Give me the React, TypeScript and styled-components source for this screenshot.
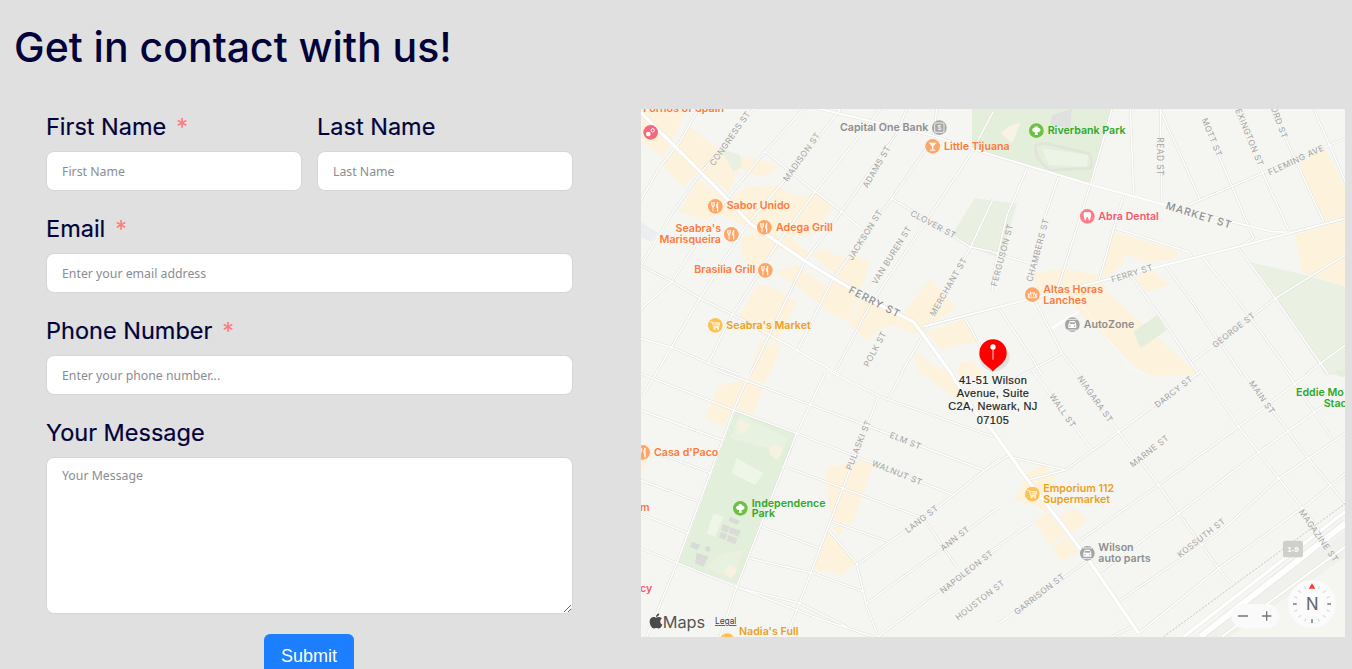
import React from "react";
import styled, { createGlobalStyle } from "styled-components";
import { FaApple } from "react-icons/fa";

const Global = createGlobalStyle`
  html, body { margin: 0; padding: 0; background: #e0e0e0; height: 669px; overflow: hidden; }
  #root { height: 669px; overflow: hidden; }
`;
const Page = styled.main`
  padding: 22px 7px 0 14px;
  font-family: "Inter", "Liberation Sans", sans-serif;
  color: #02023a;
`;
const Title = styled.h1`
  margin: 0;
  font-size: 41px;
  line-height: 50px;
  font-weight: 500;
  letter-spacing: 0;
`;
const Columns = styled.div`
  display: grid;
  grid-template-columns: 527px 704px;
  justify-content: space-between;
  padding-left: 32px;
  margin-top: 37px;
`;
const Form = styled.form`
  display: flex;
  flex-direction: column;
  gap: 23px;
  padding-top: 3px;
`;
const Row = styled.div`
  display: grid;
  grid-template-columns: 1fr 1fr;
  gap: 15px;
`;
const Field = styled.div`
  display: flex;
  flex-direction: column;
  gap: 9px;
`;
const Label = styled.label`
  font-size: 23.5px;
  line-height: 30px;
  height: 30px;
  font-weight: 400;
  white-space: nowrap;
  -webkit-text-stroke: 0.2px #02023a;
`;
const Star = styled.span`
  color: #ff7b7b;
  margin-left: 10px;
  -webkit-text-stroke: 0;
`;
const Input = styled.input`
  box-sizing: border-box;
  height: 40px;
  width: 100%;
  border: 1px solid #d6d6d6;
  border-radius: 8px;
  background: #fff;
  padding: 0 15px;
  font-family: "Noto Sans", sans-serif;
  font-size: 12.3px;
  outline: none;
  &::placeholder { color: #8a8d92; opacity: 1; }
`;
const TextArea = styled.textarea`
  box-sizing: border-box;
  display: block;
  height: 157px;
  width: 100%;
  border: 1px solid #d6d6d6;
  border-radius: 8px;
  background: #fff;
  padding: 9px 15px;
  font-family: "Noto Sans", sans-serif;
  font-size: 12.3px;
  outline: none;
  &::placeholder { color: #8a8d92; opacity: 1; }
`;
const Submit = styled.button`
  align-self: center;
  width: 90px;
  height: 44px;
  margin: -3px 1px 0 0;
  border: 0;
  border-radius: 6px;
  background: #1b7fff;
  color: #fff;
  font-family: "Liberation Sans", sans-serif;
  font-size: 18px;
  padding: 0;
`;
const MapPanel = styled.svg`
  display: block;
  width: 704px;
  height: 528px;
  background: #f5f6f1;
`;
const Poi = styled.text<{ $c: string; $end?: boolean }>`
  font-family: "Inter", "Liberation Sans", sans-serif;
  font-size: 32px;
  font-weight: 600;
  fill: ${(p) => p.$c};
  text-anchor: ${(p) => (p.$end ? "end" : "start")};
`;
const Street = styled.text<{ $big?: boolean }>`
  font-family: "Inter", "Liberation Sans", sans-serif;
  font-size: ${(p) => (p.$big ? 31 : 25)}px;
  font-weight: ${(p) => (p.$big ? 500 : 400)};
  letter-spacing: ${(p) => (p.$big ? 3 : 1.5)}px;
  fill: ${(p) => (p.$big ? "#8f8f8f" : "#a4a4a2")};
  text-anchor: middle;
  dominant-baseline: central;
`;
const PinText = styled.text`
  font-family: "Liberation Sans", sans-serif;
  font-size: 33px;
  letter-spacing: 1px;
  fill: #222;
  stroke: #222;
  stroke-width: 0.5px;
  text-anchor: middle;
`;
const MapsWord = styled.text`
  font-family: "Inter", "Liberation Sans", sans-serif;
  font-size: 49px;
  fill: #555;
`;
const Legal = styled.text`
  font-family: "Inter", "Liberation Sans", sans-serif;
  font-size: 25px;
  fill: #444;
  text-decoration: underline;
`;
const North = styled.text`
  font-family: "Inter", "Liberation Sans", sans-serif;
  font-size: 50px;
  fill: #666;
  text-anchor: middle;
`;
const Shield = styled.text`
  font-family: "Liberation Sans", sans-serif;
  font-size: 24px;
  font-weight: 700;
  fill: #fff;
  text-anchor: middle;
`;

type P = number[];
const pts = (a: P) => {
  const o: string[] = [];
  for (let i = 0; i < a.length; i += 2) o.push(`${a[i]},${a[i + 1]}`);
  return o.join(" ");
};

const Q = ({ x = 0, y = 0, children }: { x?: number; y?: number; children: React.ReactNode }) => (
  <g transform={`translate(${x} ${y})`}>{children}</g>
);
const Polys = ({ list, fill }: { list: P[]; fill: string }) => (
  <>
    {list.map((a, i) => (
      <polygon key={i} points={pts(a)} fill={fill} />
    ))}
  </>
);

const roads3: P[] = [
  [0, 290, 60, 185, 120, 110, 175, 12],
  [5, 478, 100, 320, 185, 200, 262, 110, 340, 12],
  [0, 615, 95, 530, 180, 400, 262, 280, 375, 140, 490, 12],
  [10, 870, 95, 725, 180, 580, 320, 360, 465, 190, 600, 12],
  [205, 775, 270, 640, 410, 420, 525, 260, 665, 85, 720, 12],
  [330, 810, 495, 468, 605, 320, 770, 85, 800, 12],
  [470, 740, 580, 520, 755, 280, 880, 100, 890, 12],
  [580, 810, 690, 600, 825, 400, 990, 150, 1060, 20],
  [780, 810, 850, 690, 990, 430, 1060, 280],
  [0, 480, 95, 530, 180, 580, 300, 640, 470, 735, 600, 810],
  [0, 700, 90, 725, 205, 775, 300, 810],
  [375, 140, 525, 260, 605, 320, 680, 385],
  [755, 280, 990, 425, 1080, 445],
  [850, 665, 1080, 605],
  [975, 640, 1040, 760],
  [595, 12, 600, 30],
];
const roads4: P[] = [
  [360, 12, 295, 240, 210, 510, 190, 570],
  [105, 190, 45, 330, 10, 480, 0, 560],
  [200, 215, 160, 330, 110, 525],
  [395, 270, 365, 370, 320, 530],
  [415, 12, 425, 270],
  [505, 12, 510, 290],
  [505, 15, 625, 285],
  [635, 45, 720, 245, 770, 365],
  [730, 12, 810, 200, 890, 375],
  [840, 12, 890, 120, 995, 350],
  [965, 12, 1060, 230],
  [590, 300, 810, 205, 1060, 100],
  [370, 370, 590, 440, 600, 455],
  [770, 370, 785, 400, 740, 425],
  [630, 455, 740, 590, 900, 810],
  [520, 480, 620, 620, 750, 810],
  [415, 510, 530, 670, 620, 810],
  [740, 430, 850, 580, 1010, 810],
  [20, 610, 120, 760, 150, 810],
  [130, 590, 210, 745, 260, 810],
  [0, 440, 110, 475],
  [600, 770, 850, 580, 1060, 450],
  [0, 860, 210, 745],
  [940, 810, 985, 775, 1060, 720],
];
const roads5: P[] = [
  [320, 30, 285, 110, 110, 580, 50, 730, 20, 800],
  [555, 10, 470, 190, 290, 650, 240, 800],
  [715, 80, 610, 350, 440, 800],
  [790, 5, 745, 85],
  [0, 10, 280, 120, 470, 190, 610, 245, 940, 375],
  [230, 0, 500, 100, 715, 180, 1030, 300],
  [560, 0, 720, 80, 1060, 200],
  [0, 120, 245, 210],
  [0, 230, 215, 310],
  [0, 330, 175, 395],
  [0, 430, 145, 490],
  [0, 535, 115, 580, 290, 650, 520, 740, 700, 800],
  [435, 290, 610, 355, 850, 445, 950, 590],
  [365, 470, 540, 535],
  [330, 565, 520, 610, 670, 665],
  [575, 455, 745, 515],
  [300, 655, 480, 700, 620, 770],
  [565, 480, 650, 580, 680, 710, 715, 800],
  [650, 585, 850, 445, 1080, 265],
  [680, 700, 900, 540, 1080, 410],
  [715, 800, 900, 660, 1080, 530],
];
const roads6: P[] = [
  [120, 0, 300, 240],
  [260, 30, 380, 185, 500, 345, 560, 430, 680, 595, 715, 640],
  [625, 0, 740, 170, 860, 325, 990, 490],
  [750, 0, 945, 260, 1060, 400],
  [880, 0, 1020, 205],
  [220, 300, 380, 185, 625, 5],
  [265, 510, 500, 345, 740, 170, 950, 10],
  [0, 540, 125, 455],
  [325, 605, 560, 430, 795, 250, 1060, 60],
  [385, 690, 680, 490, 860, 325, 1060, 190],
  [440, 790, 680, 595, 950, 400, 1060, 310],
  [20, 760, 290, 570],
  [0, 290, 45, 258, 220, 300],
  [110, 330, 220, 300],
  [360, 800, 420, 770],
];

const trees = "M0-13a7 7 0 0 1 7 5 6 6 0 0 1 4 10 7 7 0 0 1-8 2l2 9h-10l2-9a7 7 0 0 1-8-2 6 6 0 0 1 4-10 7 7 0 0 1 7-5z";
const Glyph = ({ k }: { k: string }) => {
  const s = { stroke: "#fff", strokeWidth: 2.6, fill: "none", strokeLinecap: "round" as const };
  if (k === "fork")
    return (
      <g {...s}>
        <path d="M-11-12v9q0 4 4 4h0q4 0 4-4v-9M-7-12v26" />
        <path d="M7-12q-5 6-3 15h3v11M7-12v26" strokeWidth={3} />
      </g>
    );
  if (k === "cart")
    return (
      <g {...s}>
        <path d="M-14-10h5l4 14h15l3-11h-20M-4 7h14" />
        <circle cx={-3} cy={11} r={1.6} />
        <circle cx={8} cy={11} r={1.6} />
        <path d="M-3-2h14M2-7v10M7-7v10" strokeWidth={1.6} />
      </g>
    );
  if (k === "tree") return <path d={trees} fill="#fff" />;
  if (k === "tooth")
    return <path d="M-9-12q5-2 9 0 4-2 9 0 5 5 1 14l-2 10q-3 2-4-2l-2-7q-2-2-4 0l-2 7q-1 4-4 2l-2-10q-4-9 1-14z" fill="#fff" />;
  if (k === "car")
    return (
      <g>
        <path d="M-12 0l3-8q1-3 4-3h10q3 0 4 3l3 8v10h-24z" fill="#fff" />
        <rect x={-8} y={-7} width={16} height={5} fill="#a5a5a5" />
        <circle cx={-7} cy={4} r={2} fill="#a5a5a5" />
        <circle cx={7} cy={4} r={2} fill="#a5a5a5" />
        <path d="M-15 16h30M-15-16h30" stroke="#fff" strokeWidth={2.4} />
      </g>
    );
  if (k === "bank")
    return (
      <g>
        <rect x={-14} y={-14} width={28} height={28} rx={4} fill="none" stroke="#fff" strokeWidth={2.5} />
        <text textAnchor="middle" y={8} fontSize={21} fill="#fff" fontFamily="Liberation Sans">$</text>
      </g>
    );
  if (k === "drink")
    return <path d="M-12-11h24l-10 11v10h6v3h-16v-3h6v-10z" fill="#fff" />;
  if (k === "sun")
    return (
      <g {...s}>
        <path d="M-13 8a13 13 0 0 1 26 0zM-8 6l-5-9M-3 5l-3-13M3 5l3-13M8 6l5-9" />
      </g>
    );
  if (k === "baby")
    return (
      <g>
        <circle cx={-7} cy={5} r={7} fill="#fff" />
        <circle cx={6} cy={-6} r={5} fill="none" stroke="#fff" strokeWidth={3} />
      </g>
    );
  return null;
};
const Icon = ({ x, y, c, k }: { x: number; y: number; c: string; k: string }) => (
  <g transform={`translate(${x} ${y})`}>
    <circle r={22} fill={c} />
    <Glyph k={k} />
  </g>
);
const S = ({ x, y, a, t, big }: { x: number; y: number; a: number; t: string; big?: boolean }) => (
  <Street x={x} y={y} $big={big} transform={`rotate(${a} ${x} ${y})`}>
    {t}
  </Street>
);

const ORANGE = "#ff7a3c";
const AMBER = "#eba11e";
const GREEN = "#2fa92a";
const GREY = "#8e8e8e";
const ICO_OR = "#ffa566";
const ICO_AM = "#ffc14f";
const ICO_GR = "#6cc142";
const ICO_GY = "#a5a5a5";

const ticks = Array.from({ length: 16 }, (_, i) => (i * 360) / 16);

function MapView() {
  return (
    <MapPanel viewBox="3 12 2112 1584" role="img" aria-label="Map">
      {/* land use */}
      <Q>
        <Polys
          fill="#fdf2dc"
          list={[
            [0, 12, 140, 12, 105, 90, 70, 155, 0, 110],
            [70, 165, 115, 125, 180, 195, 130, 245, 75, 185],
            [110, 125, 150, 65, 270, 160, 335, 155, 415, 185, 375, 215, 330, 205, 300, 190, 265, 260, 190, 205],
            [115, 320, 175, 225, 260, 285, 330, 240, 370, 250, 410, 240, 470, 275, 420, 360, 390, 400, 310, 360, 240, 330, 185, 345],
            [300, 400, 370, 370, 410, 390, 510, 395, 580, 310, 530, 265, 470, 275, 420, 370, 515, 450, 490, 465, 420, 430, 340, 500, 310, 460],
            [405, 500, 470, 480, 610, 580, 545, 600, 480, 550],
            [515, 450, 545, 430, 610, 460, 645, 450, 690, 475, 660, 560, 600, 520],
            [545, 610, 580, 520, 660, 570, 630, 650, 600, 640],
            [630, 660, 670, 570, 780, 640, 840, 560, 870, 520, 950, 610, 900, 640, 830, 690, 760, 660, 720, 670, 680, 710],
            [295, 640, 350, 540, 395, 545, 470, 590, 410, 715],
            [360, 700, 420, 730, 390, 810, 330, 810],
            [860, 680, 980, 640, 1010, 710, 950, 720, 905, 735],
            [820, 740, 880, 780, 930, 810, 840, 810],
            [960, 770, 1000, 770, 1030, 810, 950, 810],
          ]}
        />
        <Polys fill="#e9efe1" list={[[935, 390, 1005, 280, 1080, 290, 1080, 460, 990, 425], [240, 130, 300, 150, 305, 185, 280, 200]]} />
        <Polys fill="#ecedf0" list={[[0, 350, 55, 385, 35, 410, 0, 395]]} />
      </Q>
      <Q x={1056}>
        <Polys
          fill="#fdf2dc"
          list={[
            [360, 380, 555, 435, 555, 460, 470, 470, 400, 450, 390, 480, 330, 525],
            [430, 520, 470, 490, 535, 540, 465, 560],
            [120, 505, 215, 490, 320, 510, 345, 560, 620, 810, 460, 810, 260, 620, 220, 570, 140, 560],
            [920, 175, 1000, 130, 1060, 250, 1060, 335, 990, 350],
            [910, 390, 1060, 345, 1060, 545, 930, 500],
          ]}
        />
        <Polys fill="#e3efda" list={[[-60, 12, 360, 12, 295, 240, 100, 185, -60, 135], [425, 680, 495, 630, 525, 675, 445, 730]]} />
        <Polys fill="#e9efe1" list={[[-24, 285, 75, 295, 30, 450, -24, 430]]} />
        <Polys fill="#eaf0e2" list={[[770, 470, 940, 510, 1060, 545, 1060, 810, 1000, 810, 850, 580]]} />
        <path d="M25 85q30-30 60-30l-25 60z" fill="#f8f3e4" />
        <path d="M130 125q5-10 30-10l130 30q15 25 5 45l-120 5q-45-30-45-70z" fill="none" stroke="#e1e4dd" strokeWidth={8} />
        <polygon points="150,130 290,150 285,185 170,180" fill="#ecf4e5" />
        <polygon points="180,30 240,12 235,70 175,60" fill="#dfe1de" />
      </Q>
      <Q y={795}>
        <Polys
          fill="#fdf2dc"
          list={[
            [195, 145, 235, 50, 265, 40, 320, 30, 370, 50, 340, 135, 280, 110, 250, 170],
            [325, 30, 345, -20, 395, -20, 375, 40],
            [0, 240, 25, 260, 15, 295, 0, 300],
            [555, 320, 565, 290, 600, 285, 640, 270, 700, 280, 670, 370, 665, 380, 635, 465, 575, 450],
            [575, 470, 620, 465, 595, 500],
            [520, 605, 565, 480, 650, 580, 600, 615, 570, 605],
            [840, 0, 920, 0, 1000, 120, 890, 45],
          ]}
        />
        <polygon points="285,125 470,190 295,645 115,580" fill="#e2efda" />
        <polygon points="270,205 300,135 445,205 425,245" fill="#e8f2e1" />
        <polygon points="290,265 370,310 345,345 275,310" fill="#eef6e8" />
        <polygon points="220,430 250,440 225,500 200,490" fill="#eef6e8" />
        <path d="M295 150q30 5 35 20l-28 25q-15-20-7-45zM385 235q25-20 45 0l-15 35q-30-10-30-35z" fill="#f6f1e1" />
        <Polys
          fill="#d9dcd6"
          list={[
            [270, 440, 300, 452, 292, 465, 265, 452],
            [250, 462, 270, 470, 262, 488, 243, 480],
            [272, 472, 302, 483, 295, 500, 266, 488],
            [243, 485, 262, 493, 255, 510, 236, 502],
            [266, 495, 292, 505, 285, 523, 260, 512],
            [155, 515, 182, 525, 172, 540, 150, 530],
            [198, 528, 212, 532, 208, 545, 194, 540],
            [170, 548, 205, 560, 190, 590, 165, 580],
          ]}
        />
        <path d="M205 590q30-40 100-45l-30 80z" fill="#e7f1df" stroke="#f3eddb" strokeWidth={5} />
        <circle cx={272} cy={603} r={17} fill="#f6f1e1" />
      </Q>
      <Q x={1056} y={795}>
        <Polys
          fill="#fdf2dc"
          list={[
            [110, 305, 155, 285, 190, 325, 165, 425, 125, 405, 65, 390],
            [125, 455, 165, 425, 220, 490, 175, 525],
            [205, 440, 245, 415, 285, 450, 240, 490],
            [180, 530, 225, 500, 260, 545, 210, 575],
          ]}
        />
        <polygon points="1030,0 1060,0 1060,20 1040,20" fill="#e3efda" />
        <polygon points="620,810 1060,480 1060,810" fill="#f0f0ec" />
        <polygon points="700,810 1060,560 1060,810" fill="#f6f6f1" />
      </Q>

      {/* streets */}
      {[
        { x: 0, y: 0, l: roads3 },
        { x: 1056, y: 0, l: roads4 },
        { x: 0, y: 795, l: roads5 },
        { x: 1056, y: 795, l: roads6 },
      ].map((q, i) => (
        <Q key={i} x={q.x} y={q.y}>
          {q.l.map((a, j) => (
            <polyline key={j} points={pts(a)} fill="none" stroke="#dededa" strokeWidth={7.5} strokeLinejoin="round" />
          ))}
          {q.l.map((a, j) => (
            <polyline key={j} points={pts(a)} fill="none" stroke="#fff" strokeWidth={4.5} strokeLinejoin="round" />
          ))}
        </Q>
      ))}
      {[
        [0, 20, 100, 120, 180, 200, 260, 280, 330, 355, 410, 410, 495, 468, 580, 520, 700, 590, 820, 650, 850, 690, 930, 800, 1000, 915, 1056, 975, 1156, 1115, 1256, 1245, 1346, 1365, 1496, 1585],
        [540, 12, 870, 90, 1056, 150, 1356, 240, 1576, 300, 1776, 350, 1896, 380, 1956, 382, 2116, 340],
        [850, 665, 1080, 605, 1376, 530, 1576, 480, 1796, 425, 2116, 340],
      ].map((a, i) => (
        <g key={i}>
          <polyline points={pts(a)} fill="none" stroke="#e4e4df" strokeWidth={i === 0 ? 13 : 8.5} strokeLinejoin="round" />
          <polyline points={pts(a)} fill="none" stroke="#fff" strokeWidth={i === 0 ? 10 : 5.5} strokeLinejoin="round" />
        </g>
      ))}
      <Q x={1056}>
        <polyline points="180,670 225,640 260,620" fill="none" stroke="#fff" strokeWidth={6} />
        <polyline points="270,600 420,795 470,810" fill="none" stroke="#fbfbf8" strokeWidth={3} />
      </Q>
      <Q x={1056} y={795}>
        <polyline points="515,800 1060,400" fill="none" stroke="#c4c4c0" strokeWidth={3} strokeDasharray="6 5" />
        <polyline points="575,800 1060,425" fill="none" stroke="#e2e2dd" strokeWidth={13} />
        <polyline points="575,800 1060,425" fill="none" stroke="#fff" strokeWidth={10} />
        <polyline points="625,800 1060,460" fill="none" stroke="#e2e2dd" strokeWidth={22} />
        <polyline points="625,800 1060,460" fill="none" stroke="#fff" strokeWidth={18} />
        <polyline points="690,800 1060,530" fill="none" stroke="#e2e2dd" strokeWidth={9} />
        <polyline points="690,800 1060,530" fill="none" stroke="#fff" strokeWidth={6} />
      </Q>

      {/* street names */}
      <Q>
        <S x={270} y={100} a={-55} t="CONGRESS ST" />
        <S x={485} y={155} a={-55} t="MADISON ST" />
        <S x={710} y={185} a={-60} t="ADAMS ST" />
        <S x={675} y={390} a={-58} t="JACKSON ST" />
        <S x={755} y={450} a={-58} t="VAN BUREN ST" />
        <S x={880} y={358} a={28} t="CLOVER ST" />
        <S x={705} y={590} a={27} t="FERRY ST" big />
        <S x={925} y={545} a={-60} t="MERCHANT ST" />
        <S x={705} y={732} a={-62} t="POLK ST" />
      </Q>
      <Q x={1056}>
        <S x={505} y={155} a={90} t="READ ST" />
        <S x={660} y={97} a={68} t="MOTT ST" />
        <S x={770} y={90} a={68} t="LEXINGTON ST" />
        <S x={862} y={52} a={70} t="ORD ST" />
        <S x={912} y={165} a={-25} t="FLEMING AVE" />
        <S x={622} y={330} a={17} t="MARKET ST" big />
        <S x={30} y={450} a={-75} t="FERGUSON ST" />
        <S x={137} y={435} a={-75} t="CHAMBERS ST" />
        <S x={420} y={505} a={-17} t="FERRY ST" />
        <S x={725} y={675} a={-38} t="GEORGE ST" />
      </Q>
      <Q y={795}>
        <S x={655} y={225} a={-68} t="PULASKI ST" />
        <S x={797} y={212} a={22} t="ELM ST" />
        <S x={772} y={308} a={22} t="WALNUT ST" />
        <S x={845} y={447} a={-38} t="LANG ST" />
        <S x={945} y={505} a={-38} t="ANN ST" />
        <S x={980} y={605} a={-38} t="NAPOLEON ST" />
        <S x={1020} y={690} a={-38} t="HOUSTON ST" />
      </Q>
      <Q x={1056} y={795}>
        <S x={545} y={65} a={-38} t="DARCY ST" />
        <S x={310} y={87} a={55} t="NIAGARA ST" />
        <S x={212} y={122} a={55} t="WALL ST" />
        <S x={810} y={82} a={55} t="MAIN ST" />
        <S x={472} y={243} a={-38} t="MARNE ST" />
        <S x={628} y={503} a={-38} t="KOSSUTH ST" />
        <S x={980} y={497} a={55} t="MAGAZINE ST" />
        <S x={142} y={672} a={-38} t="GARRISON ST" />
        <rect x={873} y={512} width={60} height={50} rx={8} fill="#cfcfcc" />
        <Shield x={903} y={546}>1-9</Shield>
      </Q>

      {/* places */}
      <Q>
        <Poi x={10} y={22} $c={ORANGE}>Fornos of Spain</Poi>
        <Icon x={32} y={82} c="#f5697f" k="baby" />
        <Poi x={600} y={78} $c={GREY}>Capital One Bank</Poi>
        <Icon x={898} y={68} c={ICO_GY} k="bank" />
        <Icon x={878} y={124} c={ICO_OR} k="drink" />
        <Poi x={912} y={135} $c={ORANGE}>Little Tijuana</Poi>
        <Icon x={226} y={304} c={ICO_OR} k="fork" />
        <Poi x={260} y={313} $c={ORANGE}>Sabor Unido</Poi>
        <Poi x={243} y={380} $c={ORANGE} $end>Seabra's</Poi>
        <Poi x={243} y={413} $c={ORANGE} $end>Marisqueira</Poi>
        <Icon x={274} y={388} c={ICO_OR} k="fork" />
        <Icon x={373} y={367} c={ICO_OR} k="fork" />
        <Poi x={408} y={378} $c={ORANGE}>Adega Grill</Poi>
        <Poi x={346} y={505} $c={ORANGE} $end>Brasilia Grill</Poi>
        <Icon x={376} y={496} c={ICO_OR} k="fork" />
        <Icon x={226} y={661} c={ICO_AM} k="cart" />
        <Poi x={259} y={672} $c={AMBER}>Seabra's Market</Poi>
      </Q>
      <Q x={1056}>
        <Icon x={133} y={77} c={ICO_GR} k="tree" />
        <Poi x={167} y={88} $c={GREEN}>Riverbank Park</Poi>
        <Icon x={286} y={334} c="#ff7b8a" k="tooth" />
        <Poi x={319} y={345} $c="#f8596f">Abra Dental</Poi>
        <Icon x={121} y={569} c={ICO_OR} k="sun" />
        <Poi x={154} y={563} $c={ORANGE}>Altas Horas</Poi>
        <Poi x={154} y={596} $c={ORANGE}>Lanches</Poi>
        <Icon x={241} y={659} c={ICO_GY} k="car" />
        <Poi x={275} y={670} $c={GREY}>AutoZone</Poi>
      </Q>
      <Q y={795}>
        <Icon x={8} y={247} c={ICO_OR} k="fork" />
        <Poi x={42} y={257} $c={ORANGE}>Casa d'Paco</Poi>
        <Icon x={301} y={415} c={ICO_GR} k="tree" />
        <Poi x={335} y={410} $c={GREEN}>Independence</Poi>
        <Poi x={335} y={442} $c={GREEN}>Park</Poi>
        <Poi x={0} y={423} $c={ORANGE}>m</Poi>
        <Poi x={0} y={666} $c="#f8596f">cy</Poi>
        <Poi x={297} y={795} $c={AMBER}>Nadia's Full</Poi>
        <Icon x={262} y={812} c={ICO_AM} k="cart" />
      </Q>
      <Q x={1056} y={795}>
        <Poi x={912} y={78} $c={GREEN}>Eddie Mo</Poi>
        <Poi x={995} y={110} $c={GREEN}>Stac</Poi>
        <Icon x={121} y={372} c={ICO_AM} k="cart" />
        <Poi x={154} y={365} $c={AMBER}>Emporium 112</Poi>
        <Poi x={154} y={398} $c={AMBER}>Supermarket</Poi>
        <Icon x={286} y={550} c={ICO_GY} k="car" />
        <Poi x={319} y={543} $c={GREY}>Wilson</Poi>
        <Poi x={319} y={577} $c={GREY}>auto parts</Poi>
      </Q>

      {/* marker */}
      <g transform="translate(1059 744)">
        <ellipse cx={4} cy={12} rx={46} ry={42} fill="#000" opacity={0.07} />
        <path d="M0 56C-8 42-41 32-41 0a41 41 0 0 1 82 0C41 32 8 42 0 56z" fill="#fe0000" />
        <circle cy={-18} r={8} fill="#fff" />
        <rect x={-1.5} y={-14} width={3} height={34} fill="#ffd0d0" />
      </g>
      <PinText x={1059} y={837}>41-51 Wilson</PinText>
      <PinText x={1059} y={875}>Avenue, Suite</PinText>
      <PinText x={1059} y={915}>C2A, Newark, NJ</PinText>
      <PinText x={1059} y={956}>07105</PinText>

      {/* controls */}
      <FaApple x={22} y={1522} size={52} color="#4a4a4a" />
      <MapsWord x={68} y={1568}>Maps</MapsWord>
      <Legal x={225} y={1557}>Legal</Legal>
      <Q x={1056} y={795}>
        <rect x={718} y={702} width={142} height={73} rx={36} fill="#fafafa" />
        <path d="M738 738h30M810 738h28M824 724v28" stroke="#777" strokeWidth={4} />
        <circle cx={960} cy={702} r={72} fill="#fbfbfb" />
        {ticks.map((a) => {
          const main = a % 90 === 0;
          if (a === 0) return null;
          return (
            <line
              key={a}
              x1={960}
              y1={645}
              x2={960}
              y2={main ? 656 : 654}
              stroke={main ? "#666" : "#d5d5d5"}
              strokeWidth={main ? 4 : 3.5}
              transform={`rotate(${a} 960 702)`}
            />
          );
        })}
        <polygon points="960,640 970,656 950,656" fill="#ff3b30" />
        <North x={961} y={719}>N</North>
      </Q>
    </MapPanel>
  );
}

export default function App() {
  return (
    <Page>
      <Global />
      <Title>Get in contact with us!</Title>
      <Columns>
        <Form onSubmit={(e) => e.preventDefault()}>
          <Row>
            <Field>
              <Label>First Name<Star>*</Star></Label>
              <Input placeholder="First Name" />
            </Field>
            <Field>
              <Label>Last Name</Label>
              <Input placeholder="Last Name" />
            </Field>
          </Row>
          <Field>
            <Label>Email<Star>*</Star></Label>
            <Input placeholder="Enter your email address" />
          </Field>
          <Field>
            <Label>Phone Number<Star>*</Star></Label>
            <Input placeholder="Enter your phone number..." />
          </Field>
          <Field>
            <Label>Your Message</Label>
            <TextArea placeholder="Your Message" />
          </Field>
          <Submit type="submit">Submit</Submit>
        </Form>
        <MapView />
      </Columns>
    </Page>
  );
}
